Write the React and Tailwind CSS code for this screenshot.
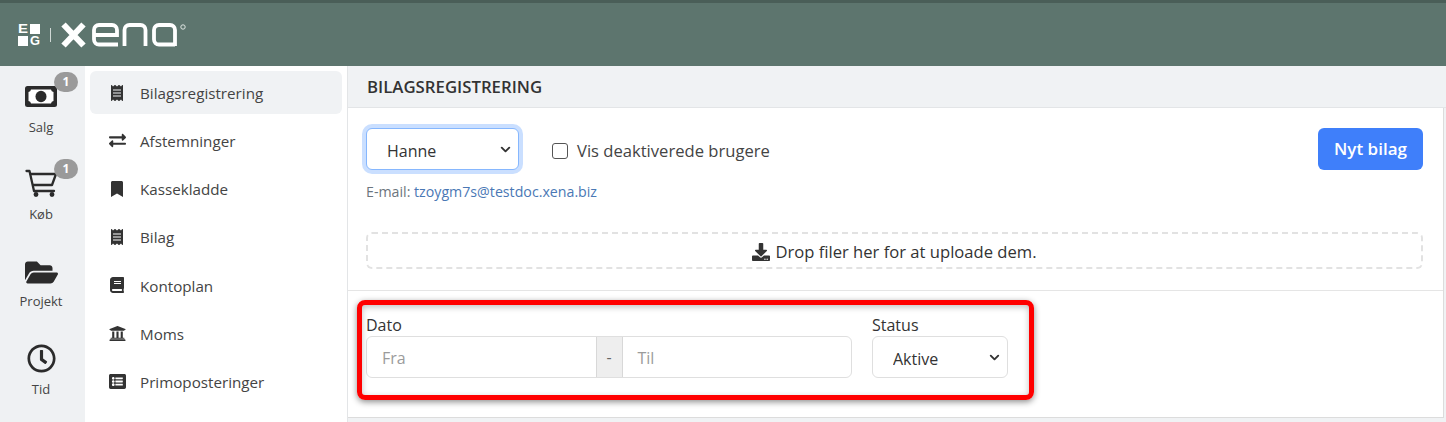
import { FaFolderOpen, FaRegClock, FaReceipt, FaExchangeAlt, FaBookmark, FaBook, FaUniversity, FaListAlt, FaDownload } from 'react-icons/fa'
import { ChevronDown } from 'lucide-react'

function MoneyIcon() {
  return (
    <svg width="32" height="21" viewBox="0 0 32 21">
      <rect width="32" height="21" rx="2.500" fill="#2b2b2b" />
      <path d="M6 3.500h20a3 3 0 0 0 2.500 2.500v9a3 3 0 0 0-2.500 2.500H6A3 3 0 0 0 3.500 15V6A3 3 0 0 0 6 3.500z" fill="#fff" />
      <ellipse cx="16" cy="10.500" rx="5.500" ry="5.800" fill="#2b2b2b" />
    </svg>
  )
}

function CartIcon() {
  return (
    <svg width="33" height="29" viewBox="0 0 33 29" fill="none" stroke="#2b2b2b" strokeWidth="2.300" strokeLinejoin="round" strokeLinecap="round">
      <path d="M1.500 3H4.500l4.500 20h20" />
      <path d="M6 6h25l-4 11H8.500" />
      <circle cx="11" cy="26.500" r="1.300" fill="#2b2b2b" />
      <circle cx="27" cy="26.500" r="1.300" fill="#2b2b2b" />
    </svg>
  )
}

function Logo() {
  return (
    <svg width="172" height="28" viewBox="0 -2 172 28" fill="none">
      <text x="0" y="10" textLength="10" lengthAdjust="spacingAndGlyphs" fontFamily="'Liberation Sans', sans-serif" fontWeight="700" fontSize="12" fill="#fff">E</text>
      <rect x="12" y="1" width="10" height="10" fill="#fff" />
      <rect x="0" y="13" width="10" height="10" fill="#fff" />
      <text x="12" y="22" textLength="10" lengthAdjust="spacingAndGlyphs" fontFamily="'Liberation Sans', sans-serif" fontWeight="700" fontSize="12" fill="#fff">G</text>
      <path d="M32.500 5v14" stroke="#cfd8d5" strokeWidth="1" />
      <path d="M45.500 1.500l20 21M65.500 1.500l-20 21" stroke="#fff" strokeWidth="6" />
      <g stroke="#fff" strokeWidth="3.800">
        <path d="M100 21.500H81a5 5 0 0 1-5-5V7a5 5 0 0 1 5-5h13a5 5 0 0 1 5 5v5H76" />
        <path d="M106.500 23V7a5 5 0 0 1 5-5h11a5 5 0 0 1 5 5v16" />
        <path d="M157 21.500h-16a5 5 0 0 1-5-5V7a5 5 0 0 1 5-5h11a5 5 0 0 1 5 5v16" />
      </g>
      <circle cx="165" cy="4" r="2.200" stroke="#dfe6e3" strokeWidth="1" />
    </svg>
  )
}

function RailItem({ icon, label, badgeTop, h, gap }) {
  return (
    <div className={`relative flex flex-col items-center justify-end pr-[3px] ${h}`}>
      {icon}
      <span className={`text-[13px] leading-[18px] text-[#444] ${gap}`}>{label}</span>
      {badgeTop && (
        <span className={`absolute left-[54px] flex h-5 w-6 items-center justify-center rounded-full bg-[#9a9a9a] text-xs font-bold text-white ${badgeTop}`}>
          1
        </span>
      )}
    </div>
  )
}

function Select({ value, width, selectClass }) {
  return (
    <div className={`relative h-[42px] ${width}`}>
      <select className={`h-full w-full appearance-none rounded-md border bg-white pl-[20px] pt-[3px] text-base text-[#333] outline-none ${selectClass}`}>
        <option>{value}</option>
      </select>
      <ChevronDown size={15} strokeWidth={3} color="#333" className="pointer-events-none absolute right-[6px] top-[14px]" />
    </div>
  )
}

const menu = [
  { label: 'Bilagsregistrering', icon: <FaReceipt size={16} />, active: true },
  { label: 'Afstemninger', icon: <FaExchangeAlt size={17} /> },
  { label: 'Kassekladde', icon: <FaBookmark size={16} /> },
  { label: 'Bilag', icon: <FaReceipt size={16} /> },
  { label: 'Kontoplan', icon: <FaBook size={16} /> },
  { label: 'Moms', icon: <FaUniversity size={17} /> },
  { label: 'Primoposteringer', icon: <FaListAlt size={17} /> },
]

export default function App() {
  return (
    <div className="relative flex h-[422px] flex-col overflow-hidden bg-[#f0f2f4] font-['Open_Sans',sans-serif] text-[#333]">
      <header className="flex h-[66px] shrink-0 items-center border-t-[3px] border-[#4a5e58] bg-[#5d756e] pl-[18px]">
        <Logo />
      </header>

      <div className="flex min-h-0 flex-1">
        <aside className="w-[85px] shrink-0 bg-[#eff1f3]">
          <RailItem h="h-[70px]" gap="mt-[11px]" badgeTop="top-[6px]" label="Salg" icon={<MoneyIcon />} />
          <RailItem h="h-[87px]" gap="mt-[8px]" badgeTop="top-[23px]" label="Køb" icon={<CartIcon />} />
          <RailItem h="h-[87px]" gap="mt-[3px]" label="Projekt" icon={<FaFolderOpen size={33} color="#2b2b2b" />} />
          <RailItem h="h-[88px]" gap="mt-[7px]" label="Tid" icon={<FaRegClock size={29} color="#2b2b2b" />} />
        </aside>

        <nav className="flex w-[263px] shrink-0 flex-col gap-[5.120px] border-r border-[#e3e5e7] bg-white px-[5px] pt-[5px]">
          {menu.map((m) => (
            <div key={m.label} className={`flex h-[43px] shrink-0 items-center rounded-md pl-[15px] text-[15.200px] text-[#444] ${m.active ? 'bg-[#f0f2f4]' : ''}`}>
              <span className="flex w-[24px] justify-center text-[#333]">{m.icon}</span>
              <span className="ml-[11px] pt-[2px]">{m.label}</span>
            </div>
          ))}
        </nav>

        <main className="flex min-w-0 flex-1 flex-col">
          <h1 className="flex h-[42px] shrink-0 items-center border-b border-[#e3e5e7] pl-[19px] pt-[1px] text-[16.800px] font-semibold text-[#333]">
            BILAGSREGISTRERING
          </h1>

          <div className="mr-[2px] flex flex-col border-r border-[#dcdcdc] bg-white">
            <section className="h-[183px] border-b border-[#e5e5e5] pl-[18px] pr-[20px] pt-[20px]">
              <div className="flex items-start">
                <Select value="Hanne" width="w-[153px]" selectClass="border-[#86b7fe] shadow-[0_0_0_4px_rgba(13,110,253,0.22)]" />
                <label className="ml-[33px] mt-[12px] flex items-center text-[16.600px] leading-[22px] text-[#444]">
                  <span className="h-4 w-4 rounded-[3px] border border-[#555] bg-white" />
                  <span className="ml-[9px]">Vis deaktiverede brugere</span>
                </label>
                <button className="ml-auto h-[42px] w-[105px] rounded-md bg-[#3f7ffa] text-[17px] font-semibold text-white">
                  Nyt bilag
                </button>
              </div>
              <p className="mt-[13px] text-[14.200px] leading-[18px] text-[#6c757d]">
                E-mail: <a className="text-[#4a78b5]">tzoygm7s@testdoc.xena.biz</a>
              </p>
              <div className="mt-[31px] flex h-[37px] items-center justify-center rounded-md border-2 border-dashed border-[#e2e2e2] pt-[2px] text-[16.600px] text-[#333]">
                <FaDownload size={18} color="#333" />
                <span className="ml-[5px] pt-[2px]">Drop filer her for at uploade dem.</span>
              </div>
            </section>

            <section className="flex h-[127px] items-start gap-[20px] border-b border-[#dcdcdc] pl-[18px] pr-[20px] pt-[24px]">
              <div>
                <label className="block text-base leading-[21px] text-[#333]">Dato</label>
                <div className="flex h-[42px] w-[486px] rounded-md border border-[#dfdfdf] text-base">
                  <div className="flex flex-1 items-center pl-[15px] pt-[2px] text-[#9b9b9b]">Fra</div>
                  <div className="flex w-[27px] items-center justify-center border-x border-[#d8d8d8] bg-[#eeeeee] text-[#666]">-</div>
                  <div className="flex flex-1 items-center pl-[15px] pt-[2px] text-[#9b9b9b]">Til</div>
                </div>
              </div>
              <div>
                <label className="block text-base leading-[21px] text-[#333]">Status</label>
                <Select value="Aktive" width="w-[136px]" selectClass="border-[#dfdfdf]" />
              </div>
            </section>
          </div>
        </main>
      </div>

      {/* annotation box drawn over the filter row */}
      <div className="pointer-events-none absolute left-[357px] top-[300px] h-[100px] w-[677px] rounded-lg border-[5px] border-[#ff0000] shadow-[0_2px_6px_rgba(0,0,0,0.45),inset_0_2px_6px_rgba(0,0,0,0.25)]" />
    </div>
  )
}
